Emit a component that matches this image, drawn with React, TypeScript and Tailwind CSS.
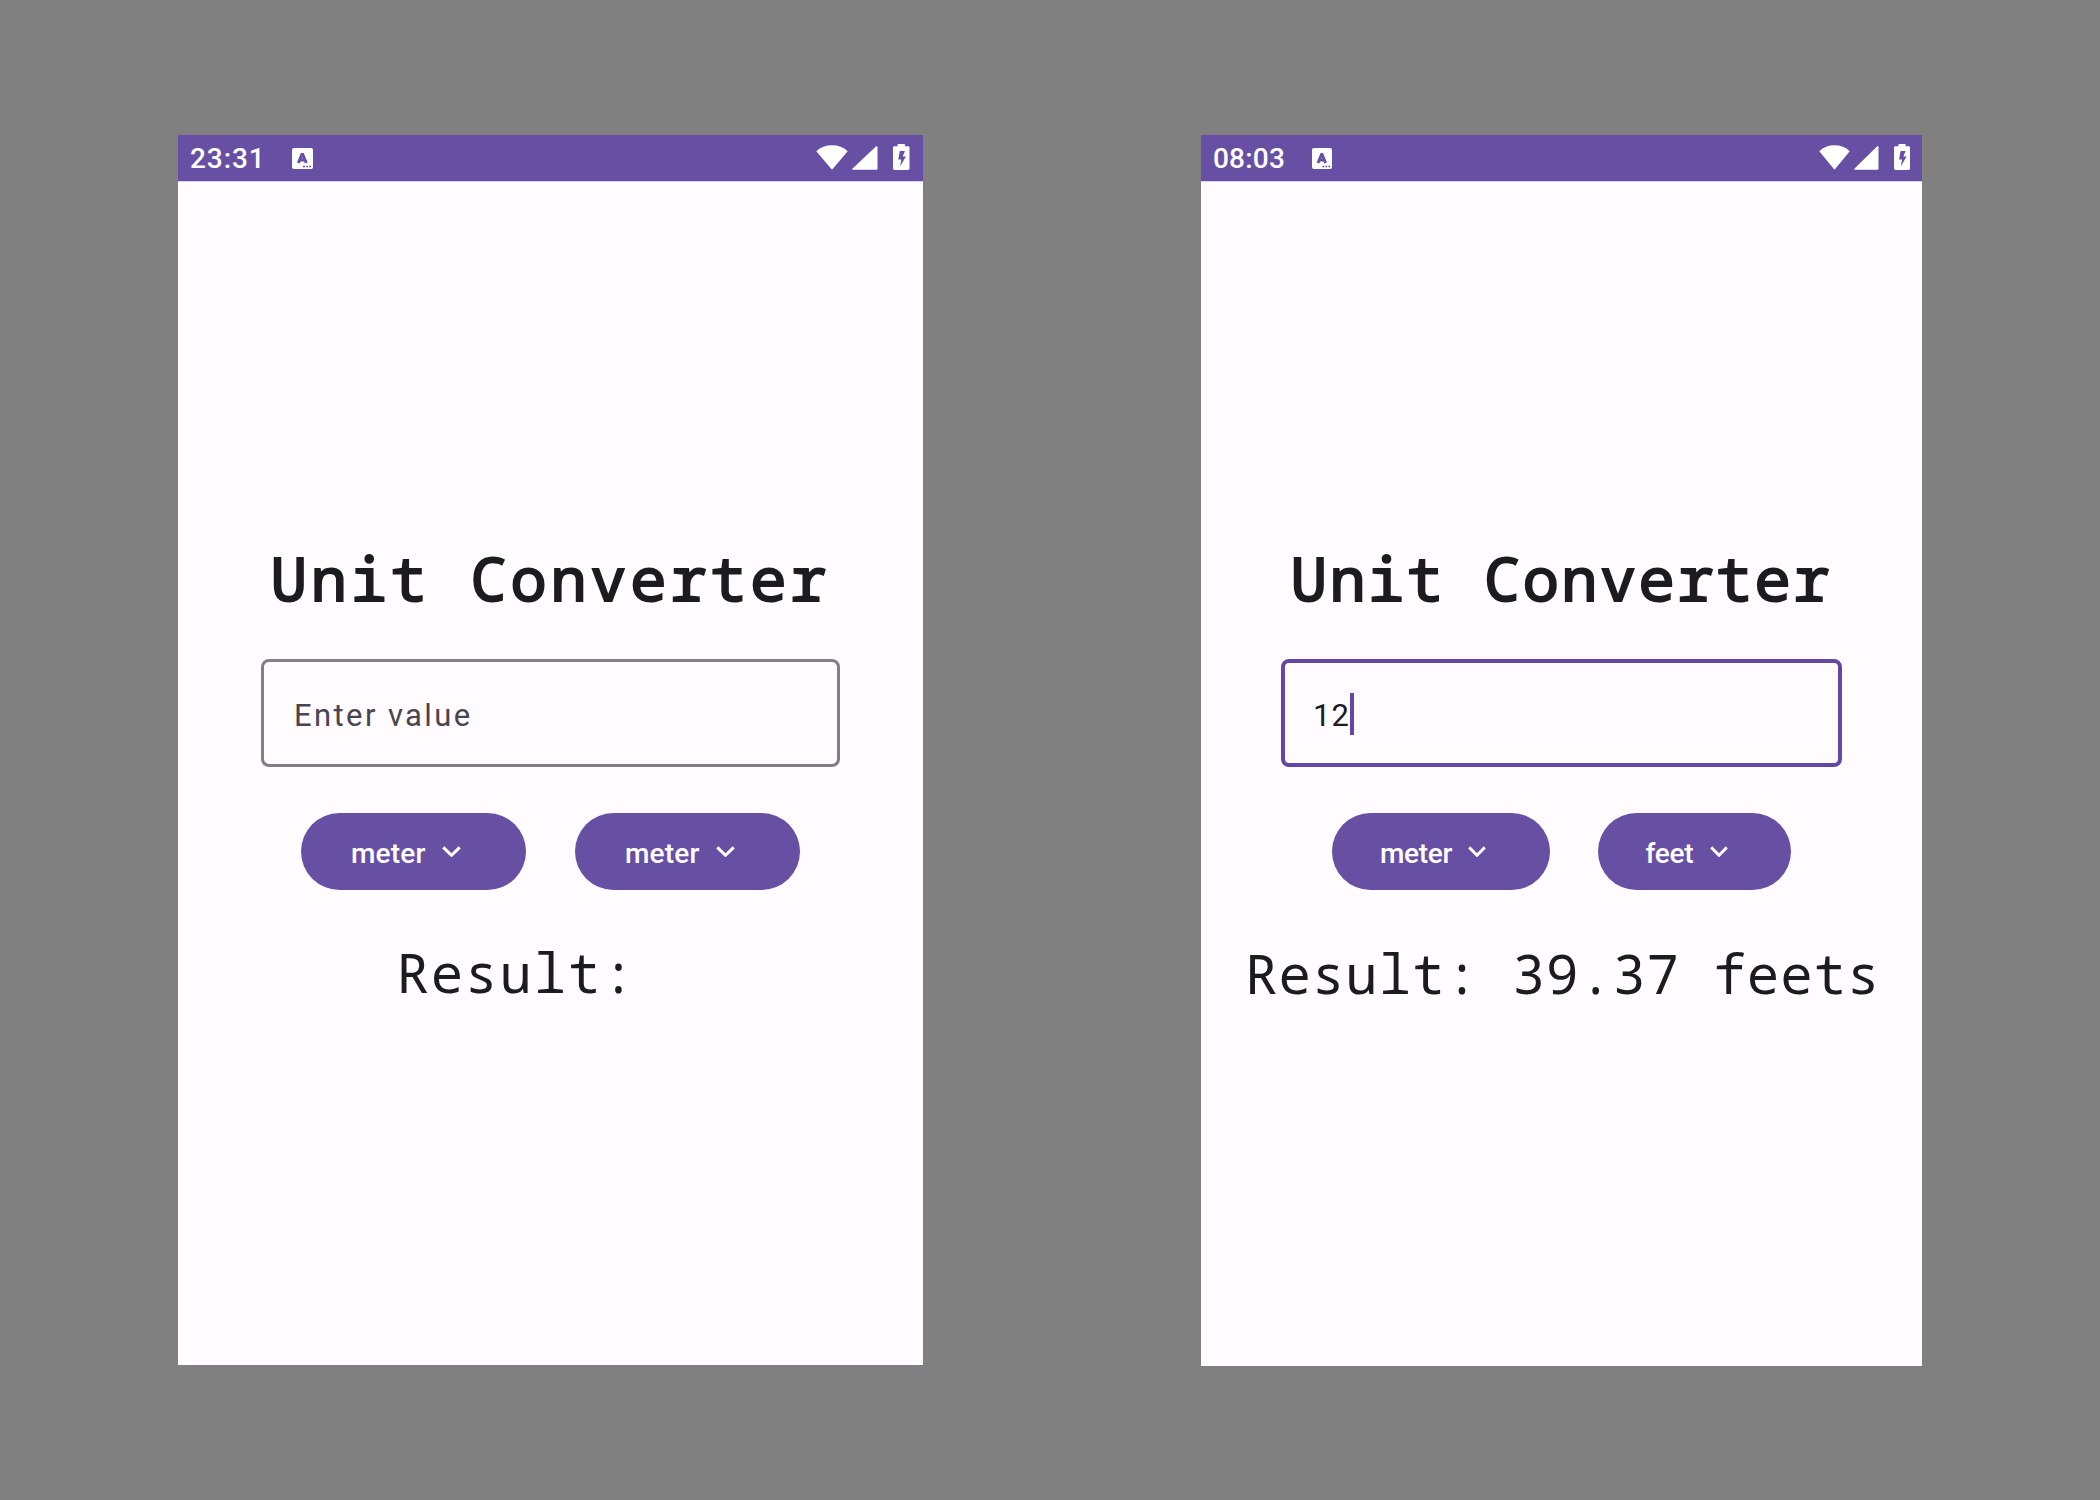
import React from "react";

function AppBadge() {
  return (
    <svg className="h-[21px] w-full" viewBox="0 0 21 21" preserveAspectRatio="none">
      <rect width="21" height="21" rx="2" fill="#fff" />
      <path d="M6.300 15 10.300 5.600 14.300 15M7.800 12h5" fill="none" stroke="#6750a4" strokeWidth="3" strokeLinejoin="bevel" />
      <path d="M11 18.500h2M14.200 18.500h1.800M17.200 18.500h1.800" stroke="#6750a4" strokeWidth="1.600" />
    </svg>
  );
}

function Wifi() {
  return (
    <svg className="h-[25px] w-full" viewBox="0 0 32 25" preserveAspectRatio="none">
      <path d="M.3 6.200C4.500 2.200 10 .3 16 .3s11.500 1.900 15.700 5.900L16 24.700Z" fill="#fff" />
    </svg>
  );
}

function Signal() {
  return (
    <svg className="h-[24px] w-full" viewBox="0 0 26 24" preserveAspectRatio="none">
      <path d="M25.500 1.200v21.600a1 1 0 0 1-1 1H1.200c-.9 0-1.200-.8-.6-1.400L23.900.6c.7-.6 1.600-.3 1.600.6Z" fill="#fff" />
    </svg>
  );
}

function Battery() {
  return (
    <svg className="h-[26px] w-full" viewBox="0 0 16 26" preserveAspectRatio="none">
      <path
        d="M4.500 0h7v2.300h3.100c.8 0 1.400.6 1.400 1.400v20.900c0 .8-.6 1.400-1.400 1.400H1.400C.6 26 0 25.400 0 24.600V3.700c0-.8.6-1.400 1.400-1.400h3.100Z"
        fill="#fff"
      />
      <path d="M6.600 7h5L9.400 12.400H12.600L6.800 22.600 8.100 15.500H5.100Z" fill="#6750a4" />
    </svg>
  );
}

function Chevron() {
  return (
    <svg className="h-[11px] w-full" viewBox="0 0 19 11" preserveAspectRatio="none">
      <path d="M1.300 1.400 9.500 9.300 17.700 1.400" fill="none" stroke="#fff" strokeWidth="3" />
    </svg>
  );
}

const mono = "font-['Noto_Sans_Mono','Liberation_Mono',monospace]";
const roboto = "font-[Roboto,sans-serif]";

function LeftPhone() {
  return (
    <div className="h-[1230px] w-[745px] bg-[#fffbff]">
      <div className="flex h-[47px] items-start border-b border-[#d9cfea] bg-[#6750a4] text-white">
        <span className={`${roboto} ml-[12px] mt-[4px] w-[102px] whitespace-nowrap text-[28px] font-medium leading-[40px] tracking-[0.900px]`}>23:31</span>
        <span className="mt-[13px] w-[21px]"><AppBadge /></span>
        <span className="ml-auto mt-[10px] w-[32px]"><Wifi /></span>
        <span className="ml-[4px] mt-[11px] w-[26px]"><Signal /></span>
        <span className="ml-[15px] mr-[13.500px] mt-[9px] w-[16.500px]"><Battery /></span>
      </div>
      <h1 className={`${mono} ml-[92.500px] mt-[356px] h-[80px] w-max whitespace-pre text-[61px] font-normal leading-[80px] tracking-[3.350px] text-[#1c1b1f] [-webkit-text-stroke:2px_#1c1b1f]`}>Unit Converter</h1>
      <div className="ml-[83px] mt-[41px] flex h-[108px] w-[579px] items-center rounded-[8px] border-[3px] border-[#827d89] pl-[30px]">
        <span className={`${roboto} mt-[6px] text-[31px] leading-[40px] tracking-[2.400px] text-[#49454f]`}>Enter value</span>
      </div>
      <div className="ml-[123px] mt-[45.500px] flex gap-[49px]">
        {["a", "b"].map((k) => (
          <div key={k} className="flex h-[77px] w-[225px] items-center rounded-[38.500px] bg-[#6750a4] pl-[50px] text-white">
            <span className={`${roboto} mt-[5px] w-[91px] text-[28px] font-medium leading-[40px] tracking-[0.200px]`}>meter</span>
            <span className="w-[19px]"><Chevron /></span>
          </div>
        ))}
      </div>
      <p className={`${mono} ml-[218.500px] mt-[42.500px] h-[80px] w-max whitespace-pre text-[54px] leading-[80px] tracking-[1.900px] text-[#1c1b1f]`}>Result:</p>
    </div>
  );
}

function RightPhone() {
  return (
    <div className="h-[1231px] w-[721px] bg-[#fffbff]">
      <div className="flex h-[47px] items-start border-b border-[#d9cfea] bg-[#6750a4] text-white">
        <span className={`${roboto} ml-[12px] mt-[4px] w-[98px] whitespace-nowrap text-[28px] font-medium leading-[40px] tracking-[0.200px]`}>08:03</span>
        <span className="ml-[0.500px] mt-[13px] w-[20px]"><AppBadge /></span>
        <span className="ml-auto mt-[10px] w-[31px]"><Wifi /></span>
        <span className="ml-[4px] mt-[11px] w-[25px]"><Signal /></span>
        <span className="ml-[15px] mr-[12.500px] mt-[9px] w-[16px]"><Battery /></span>
      </div>
      <h1 className={`${mono} ml-[89.500px] mt-[356px] h-[80px] w-max whitespace-pre text-[61px] font-normal leading-[80px] tracking-[2.050px] text-[#1c1b1f] [-webkit-text-stroke:2px_#1c1b1f]`}>Unit Converter</h1>
      <div className="ml-[80px] mt-[41px] flex h-[108px] w-[561px] items-center rounded-[8px] border-[4px] border-[#6547a3] pl-[28px]">
        <span className={`${roboto} mt-[6px] w-[37px] text-[31px] leading-[40px] tracking-[1px] text-[#1c1b1f]`}>12</span>
        <span className="mt-[2px] h-[42px] w-[4px] bg-[#6547a3]" />
      </div>
      <div className="ml-[131px] mt-[46px] flex gap-[48px]">
        <div className="flex h-[77px] w-[217.500px] items-center rounded-[38.500px] bg-[#6750a4] pl-[48px] text-white">
          <span className={`${roboto} mt-[4px] w-[88px] text-[28px] font-medium leading-[40px] tracking-[-0.300px]`}>meter</span>
          <span className="w-[18px]"><Chevron /></span>
        </div>
        <div className="flex h-[77px] w-[193.500px] items-center rounded-[38.500px] bg-[#6750a4] pl-[48px] text-white">
          <span className={`${roboto} mt-[4px] w-[64px] text-[28px] font-medium leading-[40px] tracking-[-0.300px]`}>feet</span>
          <span className="w-[18px]"><Chevron /></span>
        </div>
      </div>
      <p className={`${mono} ml-[44px] mt-[43px] h-[80px] w-max whitespace-pre text-[54px] leading-[80px] tracking-[1.050px] text-[#1c1b1f]`}>Result: 39.37 feets</p>
    </div>
  );
}

export default function App() {
  return (
    <main className="flex h-[1500px] w-[2100px] items-start gap-[278px] bg-[#808080] pl-[178px] pt-[135px]">
      <LeftPhone />
      <RightPhone />
    </main>
  );
}
